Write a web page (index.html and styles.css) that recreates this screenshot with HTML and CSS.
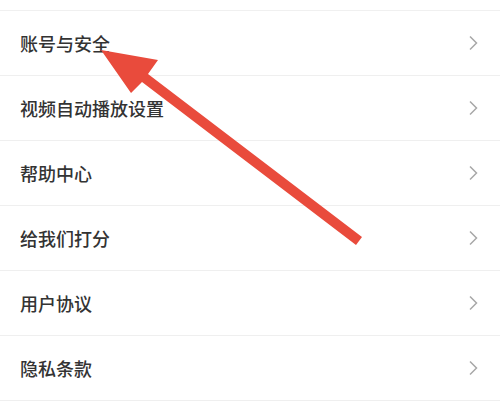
FILE: index.html
```html
<!DOCTYPE html>
<html lang="zh-CN">
<head>
    <meta charset="UTF-8">
    <meta name="viewport" content="width=device-width, initial-scale=1.0">
    <title>设置</title>
    <link rel="stylesheet" href="styles.css">
</head>
<body>
    <div class="page">
        <div class="top-gap"></div>
        <ul class="menu">
            <li class="menu-item"><span>账号与安全</span><svg class="chevron" viewBox="0 0 10 16"><path d="M2 1.5 L8.5 8 L2 14.5"/></svg></li>
            <li class="menu-item"><span>视频自动播放设置</span><svg class="chevron" viewBox="0 0 10 16"><path d="M2 1.5 L8.5 8 L2 14.5"/></svg></li>
            <li class="menu-item"><span>帮助中心</span><svg class="chevron" viewBox="0 0 10 16"><path d="M2 1.5 L8.5 8 L2 14.5"/></svg></li>
            <li class="menu-item"><span>给我们打分</span><svg class="chevron" viewBox="0 0 10 16"><path d="M2 1.5 L8.5 8 L2 14.5"/></svg></li>
            <li class="menu-item"><span>用户协议</span><svg class="chevron" viewBox="0 0 10 16"><path d="M2 1.5 L8.5 8 L2 14.5"/></svg></li>
            <li class="menu-item"><span>隐私条款</span><svg class="chevron" viewBox="0 0 10 16"><path d="M2 1.5 L8.5 8 L2 14.5"/></svg></li>
        </ul>

        <!-- annotation arrow drawn over the list -->
        <svg class="arrow" viewBox="0 0 500 416">
            <polygon points="101,50 158,60 148,74 362,237 356,245 142,82 131,93"/>
        </svg>
    </div>
</body>
</html>
```

FILE: styles.css
```css
body {
    margin: 0;
    background-color: #fff;
    font-family: "Noto Sans CJK SC", "Noto Sans", sans-serif;
    color: #333;
}
.page {
    position: relative;
    width: 500px;
    height: 416px;
    overflow: hidden;
}
.top-gap {
    height: 10px;
    border-bottom: 1px solid #f0f0f0;
}
.menu {
    list-style: none;
    margin: 0;
    padding: 0;
}
.menu-item {
    display: flex;
    align-items: center;
    justify-content: space-between;
    height: 64px;
    padding: 0 22px 0 20px;
    border-bottom: 1px solid #efefef;
    font-size: 18px;
    font-weight: 500;
}
.chevron {
    width: 10px;
    height: 16px;
}
.chevron path {
    fill: none;
    stroke: #a8a8a8;
    stroke-width: 1.5;
}
/* Arrow overlay */
.arrow {
    position: absolute;
    left: 0;
    top: 0;
    width: 500px;
    height: 416px;
    pointer-events: none;
}
.arrow polygon {
    fill: #e94b3c;
}
```
